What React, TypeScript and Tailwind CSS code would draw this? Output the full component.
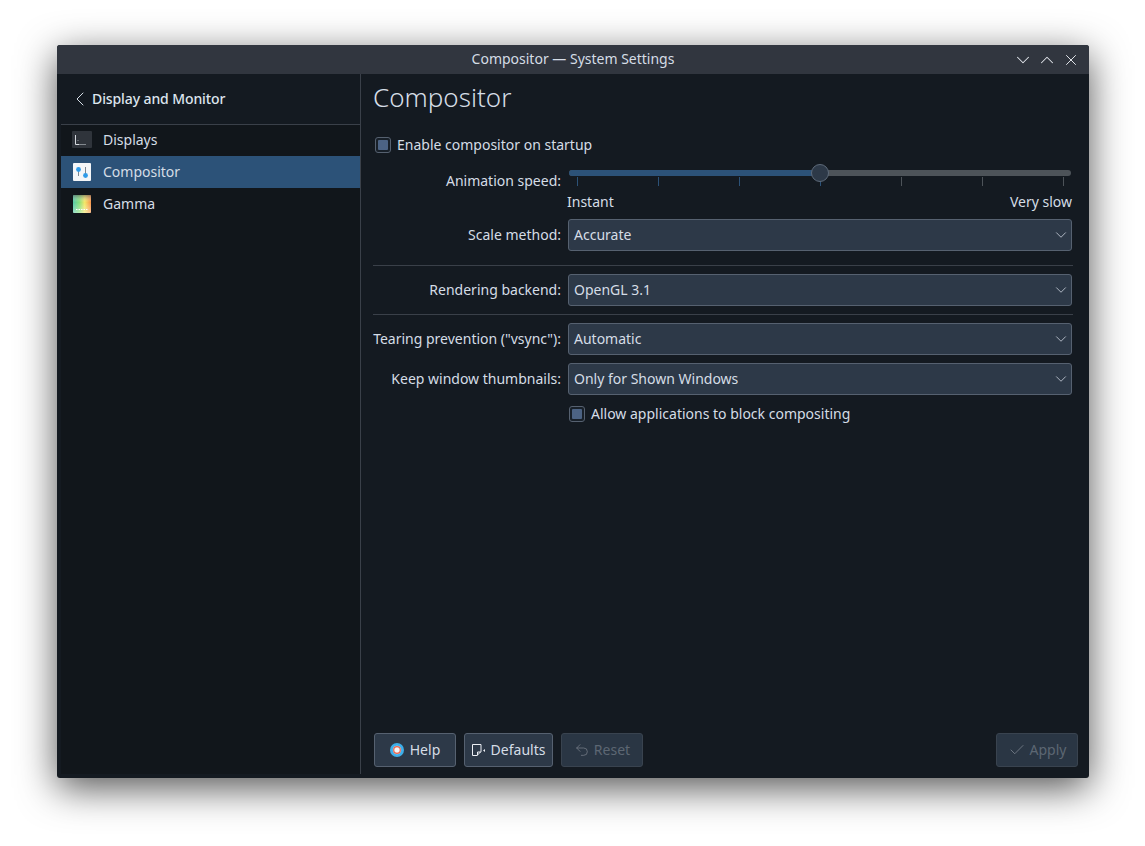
import React from "react";
import { ChevronDown, ChevronLeft, ChevronUp, X, Check, Undo2 } from "lucide-react";

function DisplaysIcon() {
  return (
    <svg width="20" height="18" viewBox="0 0 20 18">
      <rect x="0" y="0" width="20" height="17" rx="1" fill="#2f343b" />
      <path d="M3.5 4v9.5M3.5 13.5h4" stroke="#d5d9de" strokeWidth="1" fill="none" />
      <path d="M8 13.5h6" stroke="#83898f" strokeWidth="1" />
      <path d="M5 9.5h2" stroke="#5f656c" strokeWidth="1" />
    </svg>
  );
}

function CompositorIcon() {
  return (
    <svg width="18" height="18" viewBox="0 0 18 18">
      <rect x="0" y="0" width="18" height="18" rx="1" fill="#f4f6f8" />
      <path d="M5.5 6v7M12.5 4v8" stroke="#7a8590" strokeWidth="1" />
      <circle cx="5.5" cy="6.5" r="2.4" fill="#2f9be8" />
      <circle cx="12.5" cy="12.5" r="2.4" fill="#2f9be8" />
    </svg>
  );
}

function GammaIcon() {
  return (
    <svg width="18" height="18" viewBox="0 0 18 18">
      <defs>
        <linearGradient id="spec" x1="0" y1="0" x2="1" y2="0">
          <stop offset="0" stopColor="#55c8a8" />
          <stop offset="0.35" stopColor="#86e07a" />
          <stop offset="0.65" stopColor="#f4e766" />
          <stop offset="1" stopColor="#f79148" />
        </linearGradient>
        <linearGradient id="fade" x1="0" y1="0" x2="0" y2="1">
          <stop offset="0" stopColor="#5a5a5a" stopOpacity="0.6" />
          <stop offset="0.4" stopColor="#ffffff" stopOpacity="0" />
          <stop offset="1" stopColor="#ffffff" stopOpacity="0.4" />
        </linearGradient>
      </defs>
      <rect width="18" height="18" rx="1" fill="url(#spec)" />
      <rect width="18" height="18" rx="1" fill="url(#fade)" />
      <path d="M3 14.5h12" stroke="#ffffff" strokeWidth="1" strokeDasharray="1.5 1" />
    </svg>
  );
}

function HelpIcon() {
  return (
    <svg width="14" height="14" viewBox="0 0 14 14">
      <circle cx="7" cy="7" r="7" fill="#3daee9" />
      <circle cx="7" cy="7" r="4.2" fill="#f0ddd8" />
      <circle cx="7" cy="7" r="3.3" fill="none" stroke="#e8654f" strokeWidth="1.2" />
      <circle cx="7" cy="7" r="2.3" fill="#f4f6f8" />
    </svg>
  );
}

function DefaultsIcon() {
  return (
    <svg width="14" height="14" viewBox="0 0 14 14" fill="none">
      <path d="M0.5 1.5h8.5v7l-4 4h-4.5z" stroke="#eceff4" strokeWidth="1" />
      <path d="M5.5 12.5v-3.5h3.5" stroke="#eceff4" strokeWidth="1" />
      <path d="M13 6v3l-2-1.5z" fill="#eceff4" />
    </svg>
  );
}

function Combo({ value }: { value: string }) {
  return (
    <div className="flex h-8 w-[504px] items-center justify-between rounded-[3px] border border-[#566170] bg-[#2d3948] pl-[5px] pr-px text-[#d5dde6]">
      <span>{value}</span>
      <ChevronDown size={18} strokeWidth={1.1} className="text-[#c8d0da]" />
    </div>
  );
}

function CheckBox({ label }: { label: string }) {
  return (
    <div className="flex h-5 items-center gap-[6px] text-[#d5dde6]">
      <div className="flex h-4 w-4 items-center justify-center rounded-[3px] border border-[#566170] bg-[#182029]">
        <div className="h-[10px] w-[10px] rounded-[1px] bg-[#4c6384]" />
      </div>
      <span>{label}</span>
    </div>
  );
}

function Row({ label, children, className = "" }: { label: string; children: React.ReactNode; className?: string }) {
  return (
    <div className={`flex items-center gap-[7px] ${className}`}>
      <div className="w-[188px] whitespace-nowrap text-right text-[#d5dde6]">{label}</div>
      {children}
    </div>
  );
}

function FooterButton({
  icon,
  label,
  className,
  disabled = false,
}: {
  icon: React.ReactNode;
  label: string;
  className: string;
  disabled?: boolean;
}) {
  return (
    <div
      className={`flex h-[34px] items-center justify-center rounded-[3px] border ${className} ${
        disabled ? "border-[#39434f] bg-[#2a3644] text-[#5d6773]" : "border-[#566170] bg-[#2d3948] text-[#d5dde6]"
      }`}
    >
      {icon}
      <span>{label}</span>
    </div>
  );
}

const ticks = [0, 1, 2, 3, 4, 5, 6];

export default function App() {
  return (
    <div className="h-[846px] w-[1145px] overflow-hidden bg-white pl-[57px] pt-[45px] font-['Noto_Sans',sans-serif] text-[14px] leading-[20px]">
      <div className="flex h-[733px] w-[1032px] flex-col overflow-hidden rounded-[3px] bg-[#141a21] shadow-[0_10px_38px_rgba(0,0,0,0.68)]">
        {/* TITLE BAR */}
        <div className="relative flex h-[29px] shrink-0 items-center justify-center bg-[#31363f] pb-px text-[#d5dde6]">
          <span>Compositor — System Settings</span>
          <div className="absolute bottom-0 right-[6px] top-0 flex items-center text-[#e4e8ee]">
            <div className="flex w-6 justify-center">
              <ChevronDown size={22} strokeWidth={1.1} />
            </div>
            <div className="flex w-6 justify-center">
              <ChevronUp size={22} strokeWidth={1.1} />
            </div>
            <div className="flex w-6 justify-center">
              <X size={18} strokeWidth={1.3} />
            </div>
          </div>
        </div>

        <div className="flex min-h-0 flex-1 pb-1 pl-1">
          {/* SIDEBAR */}
          <div className="flex w-[300px] shrink-0 flex-col border-r border-[#3a4049] bg-[#11161b]">
            <div className="flex h-[51px] shrink-0 items-center border-b border-[#3a4049] bg-[#141a21] pl-[7px] font-medium tracking-[-0.1px] text-[#dde5ee]">
              <ChevronLeft size={24} strokeWidth={1} className="text-[#d5dde6]" />
              <span>Display and Monitor</span>
            </div>
            <div className="flex h-[31px] items-center gap-[11px] pb-px pl-[11px] text-[#d5dde6]">
              <DisplaysIcon />
              <span>Displays</span>
            </div>
            <div className="flex h-8 items-center gap-[12px] bg-[#2c5278] pl-3 text-[#d5dde6]">
              <CompositorIcon />
              <span>Compositor</span>
            </div>
            <div className="flex h-8 items-center gap-[12px] pl-3 text-[#d5dde6]">
              <GammaIcon />
              <span>Gamma</span>
            </div>
          </div>

          {/* MAIN */}
          <div className="flex min-w-0 flex-1 flex-col pl-3 pt-[6px]">
            <div className="h-[35px] text-[26px] font-light leading-[34px] text-[#d5dde6]">Compositor</div>

            <div className="ml-[2px] mt-5">
              <CheckBox label="Enable compositor on startup" />
            </div>

            <div className="mt-2 flex items-start gap-[7px]">
              <div className="w-[188px] pt-2 text-right text-[#d5dde6]">Animation speed:</div>
              <div className="w-[504px]">
                <div className="relative ml-px mt-[7px] flex h-[6px] w-[502px] overflow-visible rounded-full bg-[#4d5359]">
                  <div className="h-full w-[251px] rounded-l-full bg-[#2c5278]" />
                  <div className="absolute left-[242px] top-[-6px] h-[18px] w-[18px] rounded-full border border-[#5d6a79] bg-[#2d3948]" />
                </div>
                <div className="ml-[9px] mt-px flex h-[9px] w-[487px] justify-between">
                  {ticks.map((t) => (
                    <div key={t} className={`h-full w-px ${t <= 3 ? "bg-[#2c5278]" : "bg-[#4d5359]"}`} />
                  ))}
                </div>
                <div className="mt-[6px] flex justify-between text-[#d5dde6]">
                  <span className="-ml-px">Instant</span>
                  <span>Very slow</span>
                </div>
              </div>
            </div>

            <Row label="Scale method:" className="mt-[7px]">
              <Combo value="Accurate" />
            </Row>

            <div className="mt-[14px] h-px w-[700px] bg-[#3a4049]" />

            <Row label="Rendering backend:" className="mt-2">
              <Combo value="OpenGL 3.1" />
            </Row>

            <div className="mt-2 h-px w-[700px] bg-[#3a4049]" />

            <Row label={'Tearing prevention ("vsync"):'} className="mt-2">
              <Combo value="Automatic" />
            </Row>

            <Row label="Keep window thumbnails:" className="mt-2">
              <Combo value="Only for Shown Windows" />
            </Row>

            <div className="ml-[196px] mt-[9px]">
              <CheckBox label="Allow applications to block compositing" />
            </div>

            {/* FOOTER */}
            <div className="mb-[7px] ml-px mt-auto flex items-center justify-between pr-[11px]">
              <div className="flex gap-2">
                <FooterButton icon={<HelpIcon />} label="Help" className="w-[82px] gap-[6px]" />
                <FooterButton icon={<DefaultsIcon />} label="Defaults" className="w-[89px] gap-[5px]" />
                <FooterButton
                  icon={<Undo2 size={16} strokeWidth={1.1} className="text-[#78808a]" />}
                  label="Reset"
                  className="w-[82px] gap-1"
                  disabled
                />
              </div>
              <FooterButton
                icon={<Check size={18} strokeWidth={1} className="text-[#828a94]" />}
                label="Apply"
                className="w-[82px] gap-[4px]"
                disabled
              />
            </div>
          </div>
        </div>
      </div>
    </div>
  );
}
